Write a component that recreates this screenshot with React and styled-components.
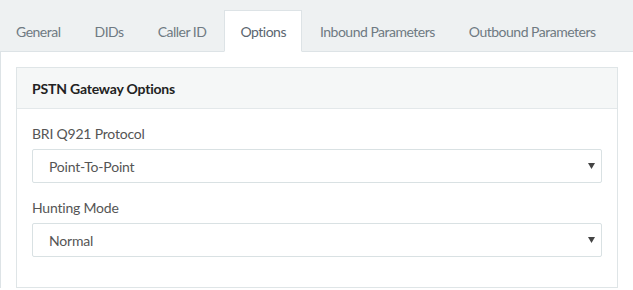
import React from 'react'
import styled, { createGlobalStyle } from 'styled-components'

const GlobalStyle = createGlobalStyle`
  * { box-sizing: border-box; }
  body {
    margin: 0;
    background: #fff;
    font-family: Lato, "Liberation Sans", sans-serif;
    font-size: 14px;
    color: #555;
    overflow: hidden;
  }
`;

const StyledPage = styled.div`
  width: 633px;
`;

const StyledTabBar = styled.ul`
  display: flex;
  list-style: none;
  margin: 0;
  padding: 10px 0 0 0;
  background: #eef1f2;
  border-bottom: 1px solid #dde3e6;
  height: 52px;
`;

const StyledTab = styled.li`
  margin-right: 2px;
  margin-bottom: -1px;
  padding: 0 15px;
  height: 42px;
  display: flex;
  align-items: center;
  color: ${p => (p.$active ? '#5b6670' : '#6f7a82')};
  background: ${p => (p.$active ? '#fff' : 'transparent')};
  border: 1px solid ${p => (p.$active ? '#dde3e6' : 'transparent')};
  border-bottom-color: ${p => (p.$active ? '#fff' : 'transparent')};
  white-space: nowrap;
  letter-spacing: -0.5px;
`;

const StyledContent = styled.div`
  border-left: 1px solid #dde3e6;
  padding: 15px 15px 0 15px;
`;

const StyledPanel = styled.div`
  border: 1px solid #dfe5e7;
  background: #fff;
`;

const StyledPanelHeader = styled.div`
  height: 41px;
  display: flex;
  align-items: center;
  padding: 0 15px;
  background: #f5f7f7;
  border-bottom: 1px solid #e3e8ea;
  font-weight: 700;
  color: #222;
  letter-spacing: -0.2px;
`;

const StyledPanelBody = styled.div`
  padding: 15px 15px 0 15px;
`;

const StyledFormGroup = styled.div`
  margin-bottom: 15px;
  &:last-child {
    margin-bottom: 30px;
  }
  & > label {
    display: block;
    line-height: 20px;
    margin-bottom: 5px;
    color: #555;
    letter-spacing: -0.2px;
  }
`;

const StyledSelect = styled.div`
  height: 34px;
  border: 1px solid #d9e1e3;
  border-radius: 2px;
  display: flex;
  align-items: center;
  justify-content: space-between;
  padding: 0 6px 0 16px;
  color: #555;
  letter-spacing: -0.2px;
  & > svg {
    width: 7px;
    height: 6px;
  }
`;

function Caret() {
  return (
    <svg viewBox="0 0 7 6">
      <path d="M0 0 H7 L3.5 6 Z" fill="#444" />
    </svg>
  )
}

const tabs = ['General', 'DIDs', 'Caller ID', 'Options', 'Inbound Parameters', 'Outbound Parameters']

export default function App() {
  return (
    <StyledPage>
      <GlobalStyle />
      <StyledTabBar>
        {tabs.map(t => (
          <StyledTab key={t} $active={t === 'Options'}>{t}</StyledTab>
        ))}
      </StyledTabBar>
      <StyledContent>
        <StyledPanel>
          <StyledPanelHeader>PSTN Gateway Options</StyledPanelHeader>
          <StyledPanelBody>
            <StyledFormGroup>
              <label>BRI Q921 Protocol</label>
              <StyledSelect>
                <span>Point-To-Point</span>
                <Caret />
              </StyledSelect>
            </StyledFormGroup>
            <StyledFormGroup>
              <label>Hunting Mode</label>
              <StyledSelect>
                <span>Normal</span>
                <Caret />
              </StyledSelect>
            </StyledFormGroup>
          </StyledPanelBody>
        </StyledPanel>
      </StyledContent>
    </StyledPage>
  )
}
